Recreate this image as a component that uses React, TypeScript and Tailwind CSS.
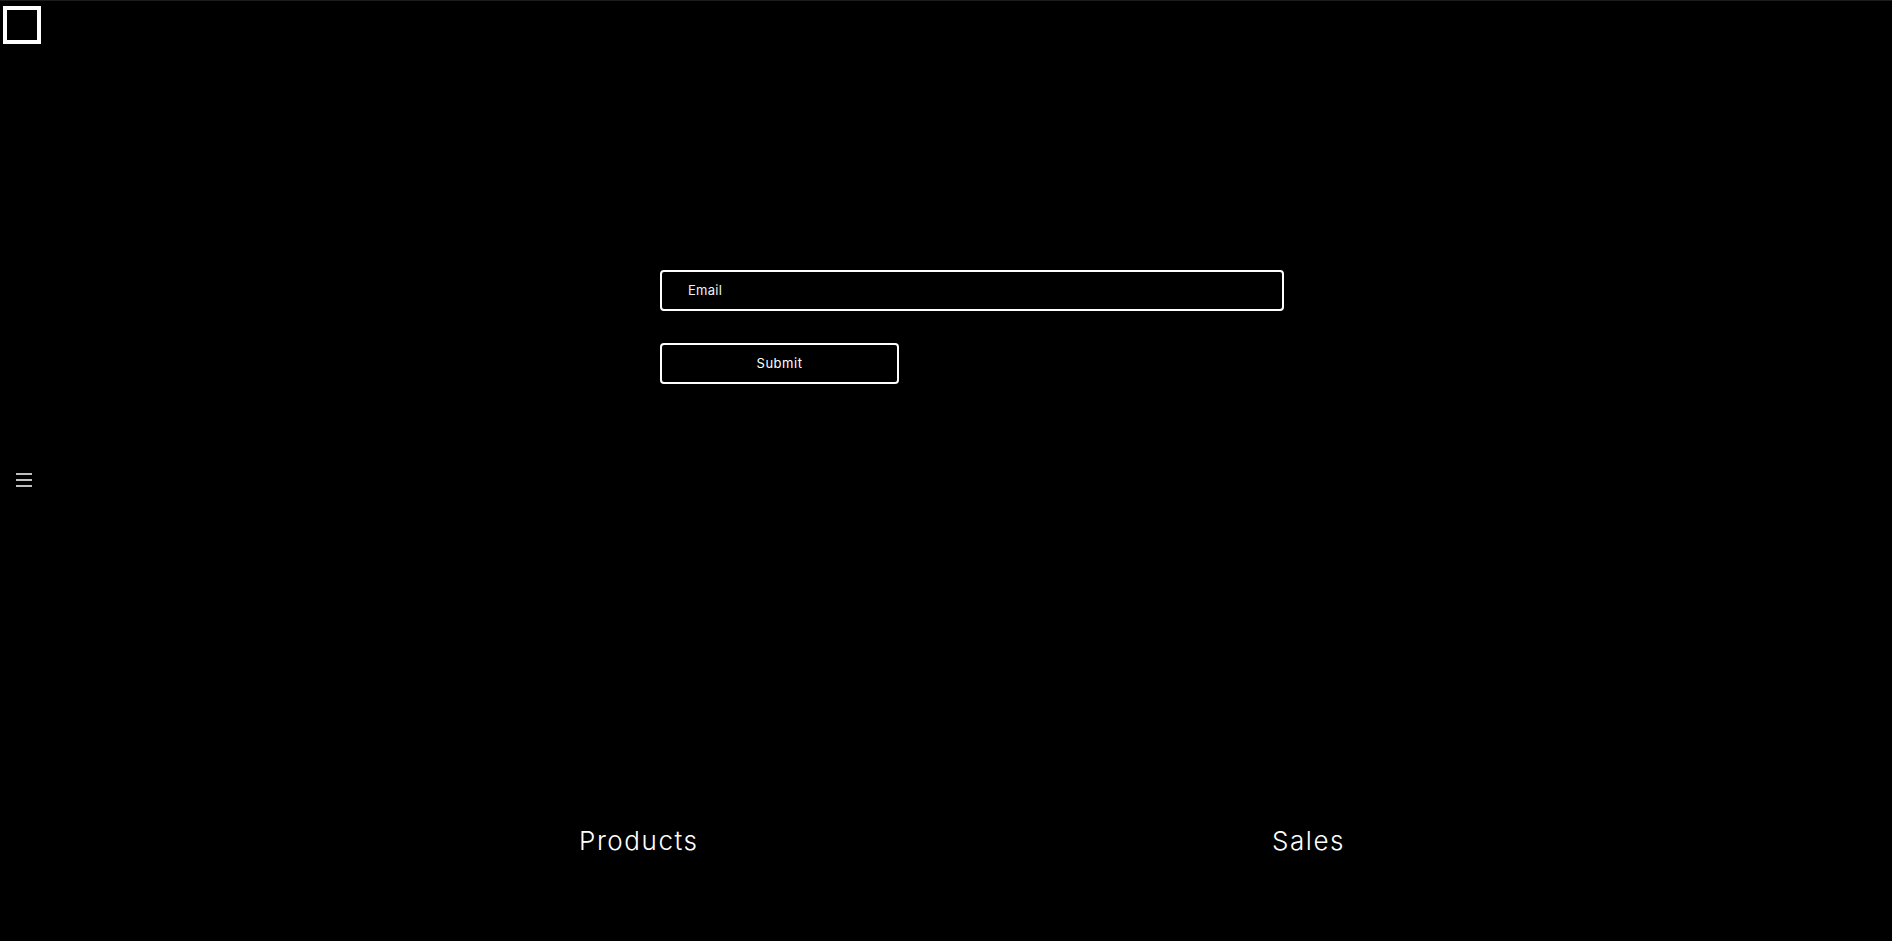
import React, { useState } from 'react';

const App: React.FC = () => {
  const [email, setEmail] = useState('');

  const handleSubmit = (e: React.FormEvent) => {
    e.preventDefault();
  };

  return (
    <div className="min-h-screen bg-black text-white border-t border-[#1c1c1c] font-['Inter','Liberation_Sans',sans-serif]">
      {/* Logo */}
      <header className="pl-[3px] pt-[5px]">
        <div className="w-[38px] h-[38px] border-4 border-white" />
      </header>

      {/* Signup form */}
      <form onSubmit={handleSubmit} className="ml-[660px] mt-[226px] w-[624px] flex flex-col">
        <input
          type="email"
          placeholder="Email"
          value={email}
          onChange={(e) => setEmail(e.target.value)}
          className="h-[41px] w-full bg-black border-2 border-white rounded-[4px] pl-[26px] pb-[2px] text-[13px] tracking-[0.02em] text-white placeholder:text-[#f0f0f0] outline-none"
        />
        <button
          type="submit"
          className="mt-[32px] h-[41px] w-[239px] bg-black border-2 border-white rounded-[4px] text-[13px] tracking-[0.04em] text-white"
        >
          Submit
        </button>
      </form>

      {/* Menu toggle */}
      <button className="ml-[16px] mt-[89px] block">
        <svg width="16" height="14" viewBox="0 0 16 14" fill="none">
          <line x1="0" y1="1" x2="16" y2="1" stroke="white" strokeWidth="1.5" />
          <line x1="0" y1="7" x2="16" y2="7" stroke="white" strokeWidth="1.5" />
          <line x1="0" y1="13" x2="16" y2="13" stroke="white" strokeWidth="1.5" />
        </svg>
      </button>

      {/* Bottom nav */}
      <nav className="flex ml-[579px] mt-[341px] text-[26px] font-light tracking-[0.06em] leading-none">
        <div className="w-[693px]">Products</div>
        <div>Sales</div>
      </nav>
    </div>
  );
};

export default App;
